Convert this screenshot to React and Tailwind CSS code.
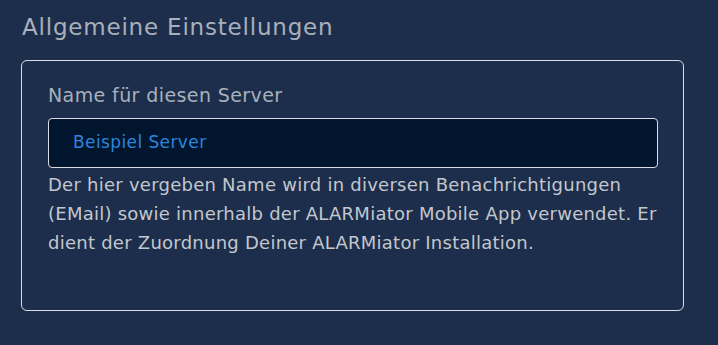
import React from 'react'

function App() {
    return (
        <div className="min-h-[345px] w-[718px] bg-[#1c2e4b] px-[21px] pt-[12px]" style={{ fontFamily: '"DejaVu Sans", "Noto Sans", sans-serif' }}>
            <h2 className="text-[23px] leading-[30px] tracking-[0.8px] text-[#a9b0bb] font-normal pl-[1px]">Allgemeine Einstellungen</h2>
            <div className="mt-[18px] w-[663px] h-[251px] border border-[#d9dde3] rounded-[6px] pl-[26px] pr-[25px] pt-[21px]">
                <label className="block text-[19px] leading-[26px] tracking-[0.4px] text-[#a9b0bb]">Name für diesen Server</label>
                <div className="mt-[10px] h-[50px] flex items-center bg-[#01152f] border border-[#d9dde3] rounded-[4px] pl-[24px]">
                    <span className="text-[17px] tracking-[0.4px] text-[#2d86dc]">Beispiel Server</span>
                </div>
                <p className="mt-[2px] text-[18px] leading-[29px] tracking-[0.25px] text-[#c3c7cd]">
                    Der hier vergeben Name wird in diversen Benachrichtigungen (EMail) sowie innerhalb der ALARMiator Mobile App verwendet. Er dient der Zuordnung Deiner ALARMiator Installation.
                </p>
            </div>
        </div>
    )
}

export default App
